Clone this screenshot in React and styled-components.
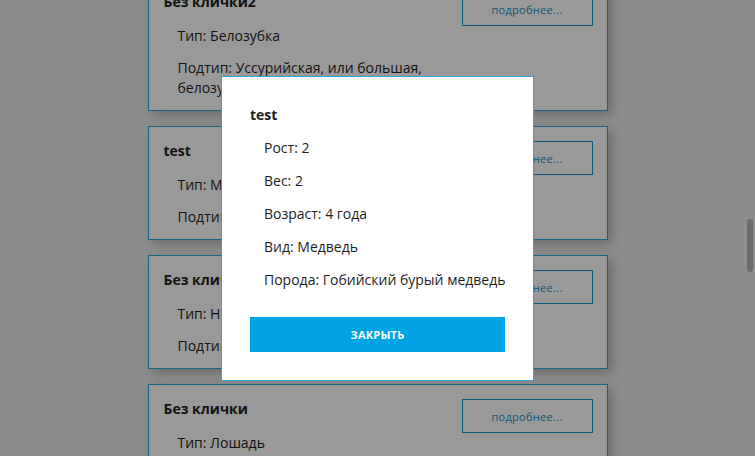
import React from "react";
import styled, { createGlobalStyle } from "styled-components";

const GlobalStyle = createGlobalStyle`
  html, body { margin: 0; padding: 0; height: 100%; overflow: hidden; }
  body {
    background: #ececec;
    font-family: "Open Sans", "Liberation Sans", sans-serif;
    font-size: 14px;
    color: #1e1e1e;
  }
`;

const Page = styled.div`
  height: 100vh;
  overflow: hidden;
`;

const List = styled.div`
  width: 460px;
  margin: -23px auto 0;
  display: flex;
  flex-direction: column;
  gap: 15px;
`;

const Card = styled.div`
  box-sizing: border-box;
  display: flex;
  align-items: flex-start;
  background: #fff;
  border: 1px solid #2ba6dc;
  padding: 14px 14px 12px 15px;
  box-shadow: 4px 4px 10px rgba(0, 0, 0, 0.25);
`;

const Info = styled.div`
  flex: 1;
  min-width: 0;
  padding-right: 12px;
`;

const Title = styled.div`
  font-weight: 700;
  line-height: 20px;
  margin-bottom: 14px;
`;

const Field = styled.div`
  line-height: 20px;
  margin-left: 14px;
  & + & { margin-top: 12px; }
`;

const MoreButton = styled.button`
  flex: none;
  width: 131px;
  height: 34px;
  background: transparent;
  border: 1px solid #1c95cc;
  color: #1c90c6;
  font-family: "Open Sans", "Liberation Sans", sans-serif;
  font-size: 11px;
  letter-spacing: 0.3px;
  padding: 0;
  cursor: pointer;
`;

const Overlay = styled.div`
  position: fixed;
  inset: 0;
  background: rgba(0, 0, 0, 0.4);
  display: flex;
  align-items: center;
  justify-content: center;
`;

const Modal = styled.div`
  box-sizing: border-box;
  width: 313px;
  background: #fff;
  border: 1px solid #2aa3d8;
  padding: 28px;
`;

const ModalTitle = styled.div`
  font-weight: 700;
  line-height: 20px;
  margin-bottom: 13px;
`;

const ModalField = styled.div`
  line-height: 20px;
  margin-left: 14px;
  white-space: nowrap;
  & + & { margin-top: 13px; }
`;

const CloseButton = styled.button`
  display: block;
  width: 100%;
  height: 35px;
  margin-top: 27px;
  background: #00a4e2;
  border: none;
  color: #fff;
  font-family: "Open Sans", "Liberation Sans", sans-serif;
  font-weight: 700;
  font-size: 11px;
  text-transform: uppercase;
  letter-spacing: 0.2px;
  cursor: pointer;
`;

const ScrollThumb = styled.div`
  position: fixed;
  right: 2px;
  top: 219px;
  width: 6px;
  height: 53px;
  border-radius: 3px;
  background: #6c6c6c;
`;

const animals = [
  { name: "Без клички2", type: "Белозубка", subtype: "Уссурийская, или большая, белозубка" },
  { name: "test", type: "Медведь", subtype: "Гобийский бурый медведь" },
  { name: "Без клички", type: "Носорог", subtype: "Белый носорог" },
  { name: "Без клички", type: "Лошадь", subtype: "Арабская" },
];

export default function App() {
  return (
    <>
      <GlobalStyle />
      <Page>
        <List>
          {animals.map((a, i) => (
            <Card key={i}>
              <Info>
                <Title>{a.name}</Title>
                <Field>Тип: {a.type}</Field>
                <Field>Подтип: {a.subtype}</Field>
              </Info>
              <MoreButton>подробнее...</MoreButton>
            </Card>
          ))}
        </List>
      </Page>
      <Overlay>
        <Modal>
          <ModalTitle>test</ModalTitle>
          <ModalField>Рост: 2</ModalField>
          <ModalField>Вес: 2</ModalField>
          <ModalField>Возраст: 4 года</ModalField>
          <ModalField>Вид: Медведь</ModalField>
          <ModalField>Порода: Гобийский бурый медведь</ModalField>
          <CloseButton>Закрыть</CloseButton>
        </Modal>
      </Overlay>
      <ScrollThumb />
    </>
  );
}
